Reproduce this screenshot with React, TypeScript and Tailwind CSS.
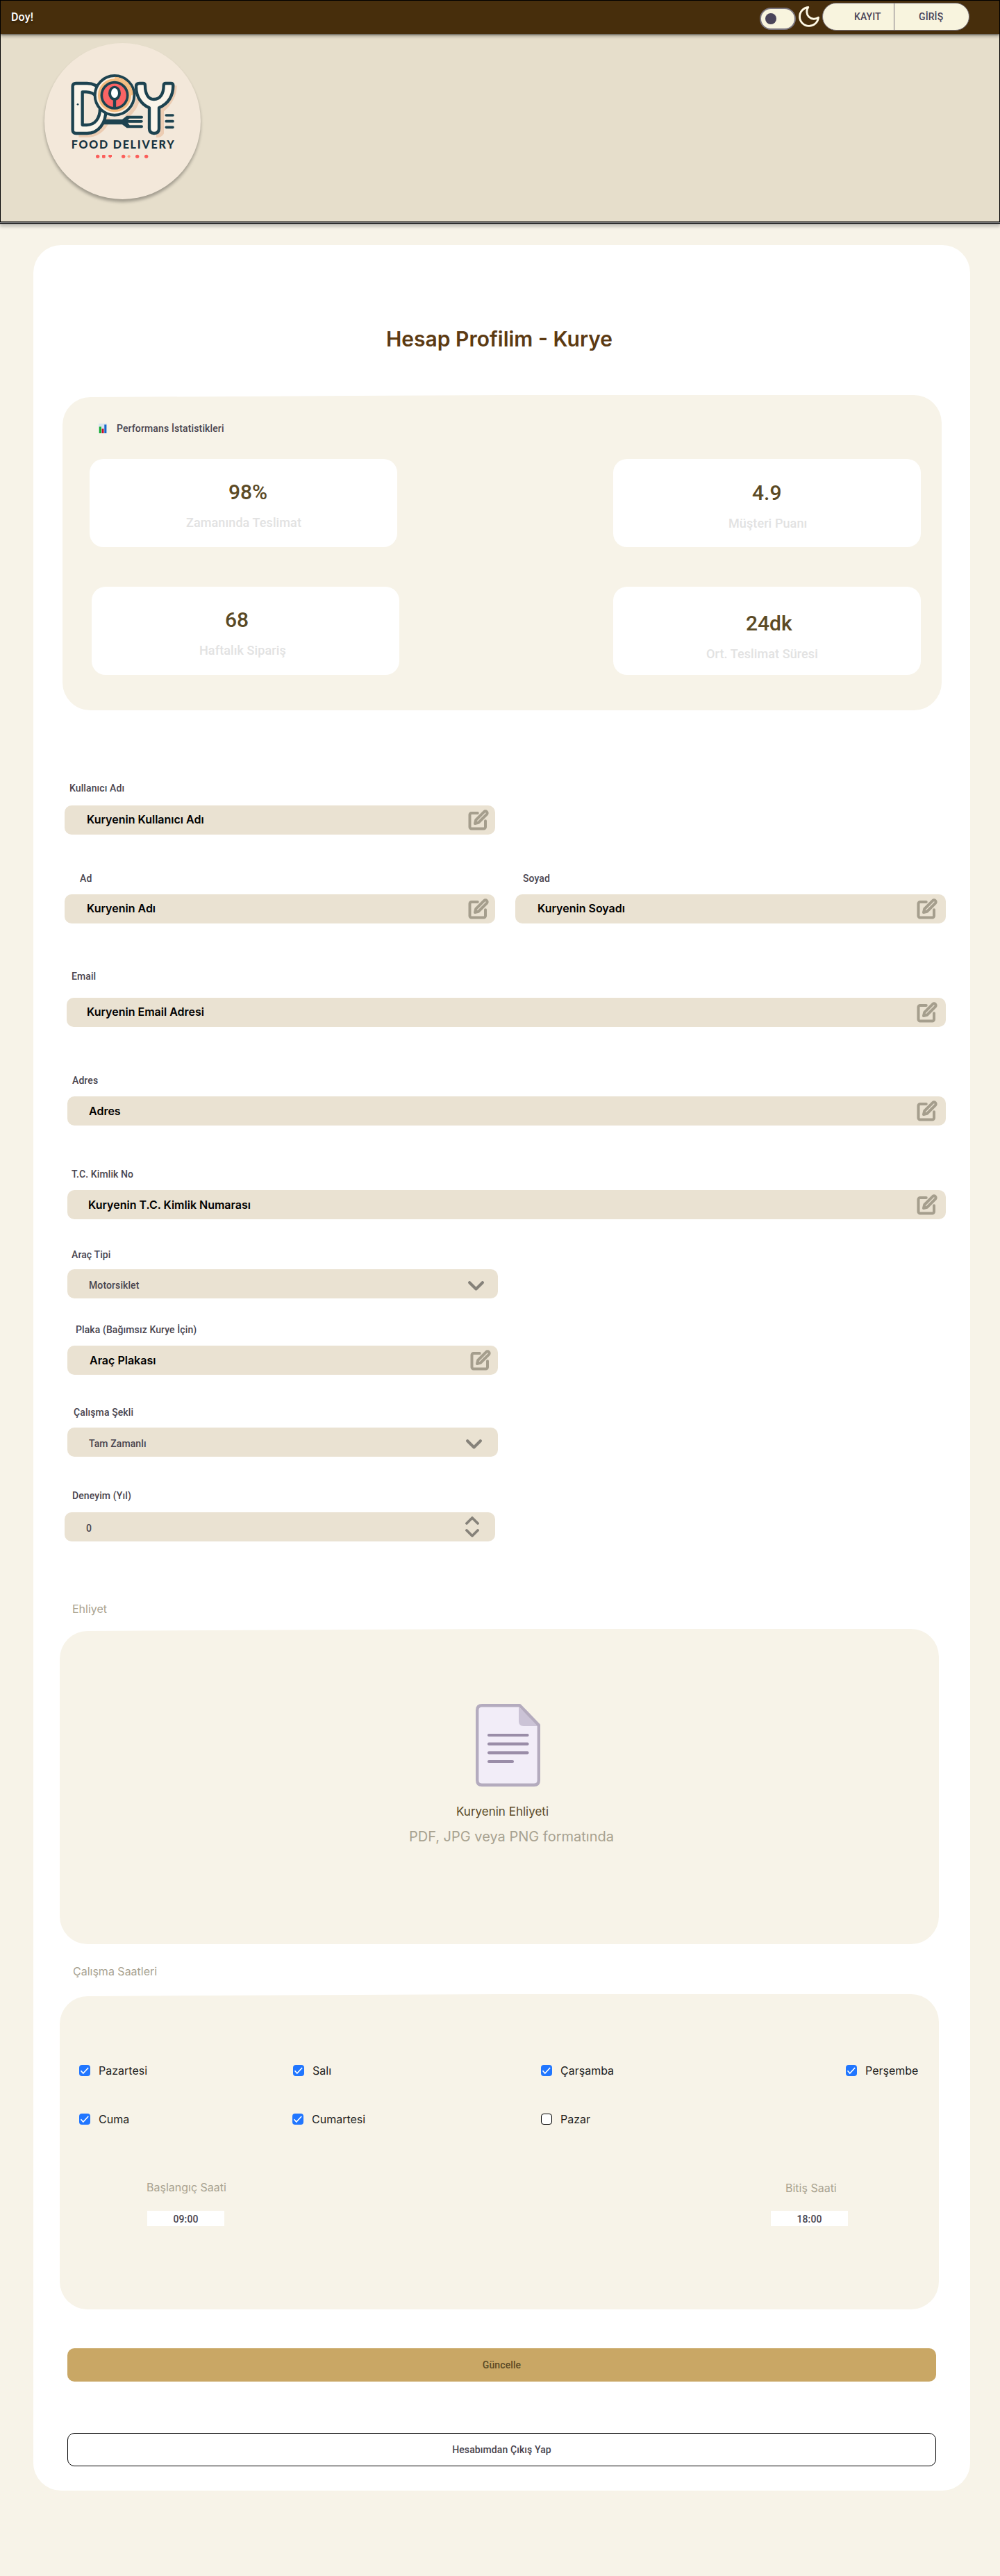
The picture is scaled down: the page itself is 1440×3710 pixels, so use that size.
import type { ReactNode } from "react";

const roboto = "font-['Roboto',sans-serif]";

function Logo() {
  return (
    <svg viewBox="192 186 675 675" className="size-[225px]">
      <g fill="none" stroke="#ecccb2" strokeWidth="16" strokeLinejoin="round">
        <path d="M340 585 H385 C430 582 462 545 468 508" />
        <path d="M374 540 V415" />
        <path d="M545 505 Q590 470 596 425" />
        <path d="M756 370 Q756 430 700 478 V575 Q692 588 675 586" />
      </g>
      <g stroke="#1d4350" strokeWidth="13" strokeLinejoin="round">
        <path d="M328 360 H376 C430 360 458 410 458 470 C458 535 425 576 376 576 H328 Q314 576 314 562 V374 Q314 360 328 360 Z" fill="#fbf5ea" />
        <path d="M356 397 H372 C412 397 432 430 432 468 C432 512 410 540 375 540 H356 Z" fill="#f3e8da" />
        <path d="M602 360 H618 Q627 360 627 370 C627 405 640 429 665 429 C692 429 707 405 707 370 Q707 360 716 360 H738 Q748 360 748 370 C748 420 722 450 687 466 V555 Q687 576 666 576 Q645 576 645 555 V466 C612 452 588 420 588 374 Q588 360 602 360 Z" fill="#fbf5ea" />
      </g>
      <circle cx="336" cy="451" r="4" fill="#1d4350" />
      <path d="M450 516 H528 L548 500 H612 a5 5 0 0 1 0 12 H560 L552 519 H612 a5 5 0 0 1 0 11 H552 L560 541 H612 a5 5 0 0 1 0 12 H548 L528 538 H442 Z" fill="#1d4350" />
      <path d="M556 524 H606" stroke="#1d4350" strokeWidth="10" strokeLinecap="round" />
      <circle cx="495" cy="412" r="85" fill="#fbf1e2" stroke="#1d4350" strokeWidth="12" />
      <circle cx="495" cy="412" r="66" fill="none" stroke="#f3bb7f" strokeWidth="12" />
      <path d="M495 336 A76 76 0 0 1 571 412" fill="none" stroke="#f3bb7f" strokeWidth="8" />
      <circle cx="495" cy="412" r="56" fill="#fb6464" stroke="#1d4350" strokeWidth="11" />
      <ellipse cx="495" cy="403" rx="27" ry="32" fill="#1d4350" />
      <path d="M495 425 V464" stroke="#1d4350" strokeWidth="13" />
      <ellipse cx="495" cy="402" rx="15" ry="21" fill="#fff" />
      <path d="M718 498 H747 M718 524 H747 M718 550 H747" stroke="#1d4350" strokeWidth="11" strokeLinecap="round" />
      <text x="308" y="643" textLength="444" fontSize="48" fontWeight="900" fontFamily="Lato, sans-serif" fill="#16323f">
        FOOD DELIVERY
      </text>
      <g fill="#fb5e5a">
        <circle cx="422" cy="676" r="8" />
        <rect x="441" y="669" width="14" height="14" rx="4" />
        <path d="M469 669 H483 V676 L476 684 L469 676 Z" />
        <circle cx="533" cy="676" r="8" />
        <circle cx="557" cy="676" r="6" fill="#fda483" />
        <circle cx="593" cy="676" r="8" />
        <circle cx="632" cy="676" r="8" />
      </g>
    </svg>
  );
}

function EditIcon() {
  return (
    <svg viewBox="0 0 24 24" className="size-[30px] shrink-0" fill="none" stroke="#a59e8d" strokeWidth="3.200" strokeLinecap="round" strokeLinejoin="round">
      <path d="M11 4H4a2 2 0 0 0-2 2v14a2 2 0 0 0 2 2h14a2 2 0 0 0 2-2v-7" />
      <path d="M18.5 2.5a2.121 2.121 0 0 1 3 3L12 15l-4 1 1-4 9.5-9.5z" />
    </svg>
  );
}

function ChevronIcon() {
  return (
    <svg viewBox="0 0 23 14" className="h-[14px] w-[23px]" fill="none" stroke="#86827a" strokeWidth="4.200" strokeLinecap="round" strokeLinejoin="round">
      <path d="M2.2 2.2 L11.5 11.4 L20.8 2.2" />
    </svg>
  );
}

function StepperIcon() {
  return (
    <svg viewBox="0 0 20 30" className="h-[30px] w-5" fill="none" stroke="#86827a" strokeWidth="3.800" strokeLinecap="round" strokeLinejoin="round">
      <path d="M2 10 L10 2 L18 10 M2 20 L10 28 L18 20" />
    </svg>
  );
}

function DocumentIcon() {
  return (
    <svg viewBox="0 0 93 119" className="h-[119px] w-[93px]">
      <path d="M9 2.2 H63.5 L90.8 30.5 V110 Q90.8 116.8 84 116.8 H9 Q2.2 116.8 2.2 110 V9 Q2.2 2.2 9 2.2 Z" fill="#f2edf8" />
      <path d="M62 4 L90 32 H69 Q62 32 62 25 Z" fill="#cbc3d6" />
      <path d="M9 2.2 H63.5 L90.8 30.5 V110 Q90.8 116.8 84 116.8 H9 Q2.2 116.8 2.2 110 V9 Q2.2 2.2 9 2.2 Z" fill="none" stroke="#b4abbe" strokeWidth="4.4" strokeLinejoin="round" />
      <path d="M19 45 H74.500 M19 57.700 H74.500 M19 70.300 H74.500 M19 83 H53" stroke="#9a8da8" strokeWidth="4.2" strokeLinecap="round" />
    </svg>
  );
}

function ChartIcon() {
  return (
    <svg viewBox="0 0 12 14" className="h-[14px] w-3">
      <rect width="12" height="14" fill="#d9e4ee" />
      <rect x="0.800" y="4.500" width="3" height="9.500" fill="#0fae2c" />
      <rect x="4.600" y="7.500" width="2.900" height="6.500" fill="#c8102e" />
      <rect x="8.300" y="1.500" width="3" height="12.500" fill="#1565c8" />
    </svg>
  );
}

function Header() {
  return (
    <header className="h-[320px] border border-black bg-[#e6decb] shadow-[0_1px_0_#777,0_2px_0_#000,0_3px_0_#777,0_7px_4px_rgba(0,0,0,0.18)]">
      <div className="flex h-12 bg-[#472e0c] pl-[15px] shadow-[0_1px_2px_rgba(0,0,0,0.5),0_4px_4px_rgba(0,0,0,0.22)]">
        <span className={`${roboto} mt-3 text-base leading-6 font-medium tracking-[0.15px] text-white [text-shadow:0_3px_3px_rgba(0,0,0,0.3)]`}>Doy!</span>
        <div className="mt-[10px] ml-auto flex h-8 w-[52px] items-center rounded-full border-2 border-[#79747e] bg-[#f8f4de] pl-[6px]">
          <span className="size-4 rounded-full bg-[#4a4459]" />
        </div>
        <svg viewBox="0 0 24 24" className="mt-[5px] ml-px size-9" fill="none" stroke="#fffae6" strokeWidth="1.900" strokeLinejoin="round">
          <path d="M21 12.790A9 9 0 1 1 11.210 3 7 7 0 0 0 21 12.790z" />
        </svg>
        <div className={`${roboto} mt-[3px] mr-[43px] ml-px flex h-10 w-[212px] overflow-hidden rounded-full border border-[#79747e] bg-[#f8f4de] text-sm font-medium tracking-[0.1px] text-[#4a4459]`}>
          <span className="flex w-[103px] items-center border-r border-[#79747e] pl-[45px]">KAYIT</span>
          <span className="flex items-center pl-[35px]">GİRİŞ</span>
        </div>
      </div>
      <div className="mt-[13px] ml-[63px] size-[225px] rounded-full bg-[#f3e8da] shadow-[0_4px_4px_rgba(0,0,0,0.3)]">
        <Logo />
      </div>
    </header>
  );
}

/* Beige panel whose top edge rises slightly toward the right. */
function Panel({ className, children }: { className: string; children: ReactNode }) {
  return (
    <section
      className={`h-[454px] w-[1266px] bg-[#f7f3e8] [clip-path:path('M40_3L640_0H1226A40_40_0_0_1_1266_40V414A40_40_0_0_1_1226_454H40A40_40_0_0_1_0_414V43A40_40_0_0_1_40_3Z')] ${className}`}
    >
      {children}
    </section>
  );
}

function StatCard({ value, label, card, valuePos, labelPos }: { value: string; label: string; card: string; valuePos: string; labelPos: string }) {
  return (
    <div className={`${roboto} h-[127px] w-[443px] rounded-[20px] bg-white font-medium ${card}`}>
      <div className={`text-[30px] leading-9 text-[#5b4a25] ${valuePos}`}>{value}</div>
      <div className={`mt-[14px] text-lg leading-6 tracking-[0.1px] text-[#e2e2e2] ${labelPos}`}>{label}</div>
    </div>
  );
}

interface FieldProps {
  label: string;
  value: string;
  block: string;
  labelPos: string;
  bar: string;
  kind?: "edit" | "select" | "stepper";
  valuePos?: string;
}

function Field({ label, value, block, labelPos, bar, kind = "edit", valuePos = "" }: FieldProps) {
  const valueStyle =
    kind === "edit" ? "text-base leading-5 font-semibold text-black" : `${roboto} pt-1 text-sm leading-5 font-medium tracking-[0.1px] text-[#49454f]`;
  return (
    <div className={block}>
      <div className={`${roboto} h-5 text-sm leading-5 font-medium tracking-[0.1px] text-[#49454f] ${labelPos}`}>{label}</div>
      <div className={`flex h-[42px] items-center justify-between rounded-[10px] bg-[#eae2d2] ${bar}`}>
        <span className={`${valueStyle} ${valuePos}`}>{value}</span>
        {kind === "edit" && <EditIcon />}
        {kind === "select" && <span className="pt-1.5"><ChevronIcon /></span>}
        {kind === "stepper" && <StepperIcon />}
      </div>
    </div>
  );
}

function Day({ name, checked = true, className = "" }: { name: string; checked?: boolean; className?: string }) {
  return (
    <div className={`flex h-4 items-center gap-3 ${className}`}>
      {checked ? (
        <svg viewBox="0 0 16 16" className="size-4">
          <rect width="16" height="16" rx="4" fill="#2176ff" />
          <path d="M2.500 8.200 L5.800 12 L13.200 4" fill="none" stroke="#fff" strokeWidth="1.600" />
        </svg>
      ) : (
        <span className="size-4 rounded-[4px] border border-black bg-white" />
      )}
      <span className="text-base leading-5 text-[#1e1e1e]">{name}</span>
    </div>
  );
}

function TimeBox({ label, time, labelPos, boxPos }: { label: string; time: string; labelPos: string; boxPos: string }) {
  return (
    <div className="w-[111px]">
      <div className={`text-base leading-5 whitespace-nowrap text-[#a8a290] ${labelPos}`}>{label}</div>
      <div className={`${roboto} flex h-[22px] w-[111px] items-center justify-center bg-white pt-0.5 text-sm font-medium tracking-[0.1px] text-[#49454f] ${boxPos}`}>{time}</div>
    </div>
  );
}

export default function App() {
  return (
    <div className="h-[3710px] w-[1440px] bg-[#f7f3e8] font-['Inter',sans-serif]">
      <Header />
      <main className="mt-[33px] ml-12 flex h-[3234px] w-[1349px] flex-col rounded-[40px] bg-white">
        <h1 className="mt-[117px] pl-[508px] text-[30px] leading-9 font-semibold whitespace-nowrap text-[#5c3a12]">Hesap Profilim - Kurye</h1>

        <Panel className="mt-[63px] ml-[42px] pt-[38px]">
          <div className="flex h-5 items-center pl-[52px]">
            <ChartIcon />
            <h2 className={`${roboto} ml-[14px] text-sm leading-5 font-medium tracking-[0.13px] text-[#49454f]`}>Performans İstatistikleri</h2>
          </div>
          <div className="mt-[34px] mr-[30px] ml-[39px] flex justify-between">
            <StatCard value="98%" label="Zamanında Teslimat" card="pt-[30px]" valuePos="pl-[200px]" labelPos="pl-[139px]" />
            <StatCard value="4.9" label="Müşteri Puanı" card="pt-[31px]" valuePos="pl-[200px]" labelPos="pl-[166px]" />
          </div>
          <div className="mt-[57px] mr-[30px] ml-[42px] flex justify-between">
            <StatCard value="68" label="Haftalık Sipariş" card="pt-[30px]" valuePos="pl-[192px]" labelPos="pl-[155px]" />
            <StatCard value="24dk" label="Ort. Teslimat Süresi" card="pt-[35px]" valuePos="pl-[191px]" labelPos="pl-[134px]" />
          </div>
        </Panel>

        <Field label="Kullanıcı Adı" value="Kuryenin Kullanıcı Adı" block="mt-[102px] ml-[45px] w-[620px]" labelPos="pl-[7px]" bar="mt-[15px] pr-[9px] pl-8" valuePos="pb-0.5" />
        <div className="mt-[53px] ml-[45px] flex gap-[29px]">
          <Field label="Ad" value="Kuryenin Adı" block="w-[620px]" labelPos="pl-[22px]" bar="mt-[13px] pr-[9px] pl-8" valuePos="pb-0.5" />
          <Field label="Soyad" value="Kuryenin Soyadı" block="w-[620px]" labelPos="pl-[11px]" bar="mt-[13px] pr-3 pl-8" valuePos="pb-0.5" />
        </div>
        <Field label="Email" value="Kuryenin Email Adresi" block="mt-[66px] ml-12 w-[1266px]" labelPos="pl-[7px]" bar="mt-[21px] pr-3 pl-[29px]" valuePos="pb-0.5" />
        <Field label="Adres" value="Adres" block="mt-[67px] ml-[49px] w-[1265px]" labelPos="pl-[7px]" bar="mt-[13px] pr-3 pl-[31px]" />
        <Field label="T.C. Kimlik No" value="Kuryenin T.C. Kimlik Numarası" block="mt-[60px] ml-[49px] w-[1265px]" labelPos="pl-[6px]" bar="mt-[13px] pr-3 pl-[30px]" />
        <Field kind="select" label="Araç Tipi" value="Motorsiklet" block="mt-[41px] ml-[49px] w-[620px]" labelPos="pl-[6px]" bar="mt-[11px] pr-5 pl-[31px]" />
        <Field label="Plaka (Bağımsız Kurye İçin)" value="Araç Plakası" block="mt-[35px] ml-[49px] w-[620px]" labelPos="pl-3" bar="mt-[13px] pr-[10px] pl-8" />
        <Field kind="select" label="Çalışma Şekli" value="Tam Zamanlı" block="mt-[44px] ml-[49px] w-[620px]" labelPos="pl-[9px]" bar="mt-3 pr-[23px] pl-[31px]" />
        <Field kind="stepper" label="Deneyim (Yıl)" value="0" block="mt-[46px] ml-[45px] w-[620px]" labelPos="pl-[11px]" bar="mt-[14px] pr-[23px] pl-[31px]" />

        <h2 className="mt-[87px] ml-14 h-5 text-base leading-5 text-[#a8a290]">Ehliyet</h2>
        <Panel className="mt-[19px] ml-[38px] pt-[108px]">
          <div className="ml-[599px]"><DocumentIcon /></div>
          <div className="mt-[24px] pl-[571px] text-[17px] leading-6 text-[#5b4a25]">Kuryenin Ehliyeti</div>
          <div className="mt-[12px] pl-[503px] text-xl leading-6 text-[#a8a290]">PDF, JPG veya PNG formatında</div>
        </Panel>

        <h2 className="mt-[29px] ml-[57px] h-5 text-base leading-5 text-[#a8a290]">Çalışma Saatleri</h2>
        <Panel className="mt-[23px] ml-[38px] pt-[102px]">
          <div className="grid grid-cols-[308px_357px_439px_auto] gap-y-[54px] pl-7">
            <Day name="Pazartesi" />
            <Day name="Salı" />
            <Day name="Çarşamba" />
            <Day name="Perşembe" />
            <Day name="Cuma" />
            <Day name="Cumartesi" className="-ml-px" />
            <Day name="Pazar" checked={false} />
          </div>
          <div className="mt-[80px] mr-[131px] ml-[126px] flex justify-between">
            <TimeBox label="Başlangıç Saati" time="09:00" labelPos="-ml-px" boxPos="mt-6" />
            <TimeBox label="Bitiş Saati" time="18:00" labelPos="pt-px pl-[21px]" boxPos="mt-[23px]" />
          </div>
        </Panel>

        <button className={`${roboto} mt-[56px] ml-[49px] h-12 w-[1251px] rounded-[10px] bg-[#c9a765] text-sm font-medium tracking-[0.1px] text-[#5b4a25]`}>Güncelle</button>
        <button className={`${roboto} mt-[74px] ml-[49px] h-12 w-[1251px] rounded-[10px] border border-black bg-white text-sm font-medium tracking-[0.1px] text-[#49454f]`}>Hesabımdan Çıkış Yap</button>
      </main>
    </div>
  );
}
